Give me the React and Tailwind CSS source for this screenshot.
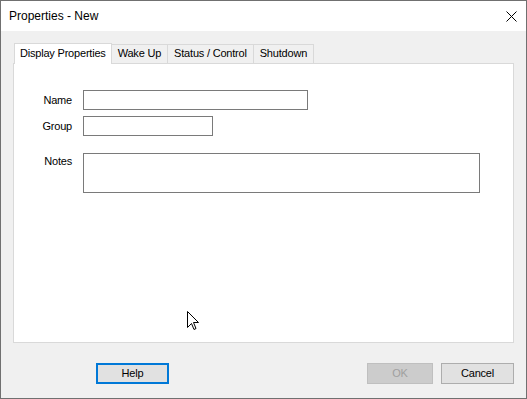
export default function App() {
  const tabs = ['Display Properties', 'Wake Up', 'Status / Control', 'Shutdown'];

  return (
    <div
      className="relative w-[527px] h-[399px] flex flex-col border border-[#707070] bg-[#f0f0f0] text-black"
      style={{ fontFamily: "'Liberation Sans', Arial, sans-serif" }}
    >
      {/* Title bar */}
      <div className="h-[30px] bg-white flex items-center justify-between pl-[8px] pr-[9px]">
        <span className="text-[12px]">Properties - New</span>
        <svg width="11" height="11" viewBox="0 0 11 11" className="mt-[1px]">
          <path d="M0.5 0.5L10.5 10.5M10.5 0.5L0.5 10.5" stroke="#000" strokeWidth="1" />
        </svg>
      </div>

      {/* Body */}
      <div className="flex-1 flex flex-col pt-[12px] px-[12px]">
        {/* Tab strip */}
        <div className="flex items-end h-[20px] pl-[1px] text-[11px] tracking-[-0.2px]">
          {tabs.map((t, i) =>
            i === 0 ? (
              <div
                key={t}
                className="relative z-10 h-[21px] -mb-[1px] px-[5px] pb-[2px] flex items-center bg-white border border-b-0 border-[#d9d9d9]"
              >
                {t}
              </div>
            ) : (
              <div
                key={t}
                className="h-[19px] px-[6px] pb-[1px] flex items-center bg-[#f0f0f0] border border-l-0 border-b-0 border-[#d9d9d9]"
              >
                {t}
              </div>
            )
          )}
        </div>

        {/* Panel */}
        <div className="h-[280px] bg-white border border-[#d9d9d9] pt-[26px] text-[11px] tracking-[-0.2px]">
          <div className="flex flex-col">
            <div className="flex items-center gap-[11px] h-[20px]">
              <span className="w-[58px] text-right">Name</span>
              <div className="w-[225px] h-[20px] border border-[#7a7a7a] bg-white" />
            </div>
            <div className="flex items-center gap-[11px] h-[20px] mt-[6px]">
              <span className="w-[58px] text-right">Group</span>
              <div className="w-[130px] h-[20px] border border-[#7a7a7a] bg-white" />
            </div>
            <div className="flex items-start gap-[11px] mt-[17px]">
              <span className="w-[58px] text-right">Notes</span>
              <div className="w-[397px] h-[40px] border border-[#7a7a7a] bg-white" />
            </div>
          </div>
        </div>

        {/* Buttons */}
        <div className="flex items-center mt-[20px] text-[11px] tracking-[-0.2px]">
          <button className="ml-[83px] w-[73px] h-[21px] bg-[#e1e1e1] border-2 border-[#0078d7] flex items-center justify-center">
            Help
          </button>
          <button
            disabled
            className="ml-auto w-[66px] h-[21px] bg-[#cccccc] border border-[#bfbfbf] text-[#a0a0a0] flex items-center justify-center"
          >
            OK
          </button>
          <button className="ml-[8px] w-[73px] h-[21px] bg-[#e1e1e1] border border-[#adadad] flex items-center justify-center">
            Cancel
          </button>
        </div>
      </div>

      {/* Mouse cursor */}
      <svg
        width="12"
        height="20"
        viewBox="0 0 12 20"
        className="absolute left-[186px] top-[310px]"
      >
        <path
          d="M0.5 0.5V16.5L4.5 12.5L7 18.5L9 17.5L6.5 11.5H11.5Z"
          fill="#fff"
          stroke="#000"
          strokeWidth="1"
          strokeLinejoin="miter"
        />
      </svg>
    </div>
  );
}
